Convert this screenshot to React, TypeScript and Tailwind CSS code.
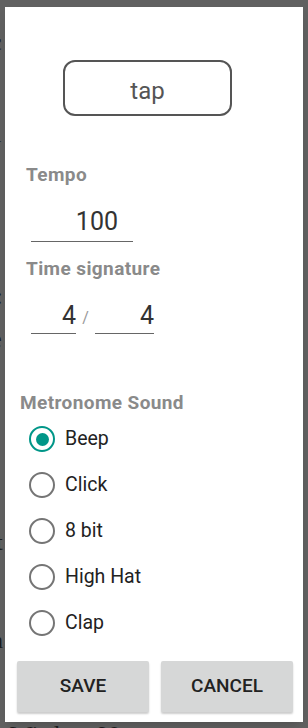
import { useState } from 'react';

const sounds = ['Beep', 'Click', '8 bit', 'High Hat', 'Clap'];

export default function App() {
  const [sound, setSound] = useState('Beep');

  return (
    <div
      className="relative h-[728px] w-[308px] overflow-hidden bg-[#616161] pt-[7px]"
      style={{ fontFamily: 'Roboto, "Noto Sans", sans-serif' }}
    >
      {/* page behind the dimmed overlay */}
      <div className="text-[#1c1c1c] text-[24px] leading-none" style={{ fontFamily: '"Liberation Serif", serif' }}>
        <span className="absolute left-[-9px] top-[30px]">c</span>
        <span className="absolute left-[-11px] top-[132px]">y</span>
        <span className="absolute left-[-4px] top-[284px]">:</span>
        <span className="absolute left-[-9px] top-[327px]">e</span>
        <span className="absolute left-[-4px] top-[530px]">t</span>
        <span className="absolute left-[-9px] top-[628px]">n</span>
        <span className="absolute left-[10px] top-[722px]">Wisdom 90</span>
      </div>

      {/* dialog */}
      <div className="relative mx-[5px] flex h-[715px] flex-col bg-white shadow-lg">
        <button className="ml-[58px] mt-[53px] flex h-[56px] w-[169px] items-center justify-center rounded-[12px] border-2 border-[#555555] pt-[5px] text-[24px] text-[#555555]">
          tap
        </button>

        <div className="ml-[21px] mt-[49px] text-[19px] font-bold leading-[20px] tracking-[0.4px] text-[#8a8a8a]">Tempo</div>
        <div className="ml-[26px] mt-[23px] w-[102px] border-b border-[#666666] pb-[5px] pr-[15px] text-right text-[25px] leading-[28px] text-[#333333]">
          100
        </div>

        <div className="ml-[21px] mt-[17px] text-[19px] font-bold leading-[20px] tracking-[0.4px] text-[#8a8a8a]">Time signature</div>
        <div className="ml-[26px] mt-[23px] flex items-end">
          <div className="w-[45px] border-b border-[#666666] pb-[3px] text-right text-[25px] leading-[28px] text-[#333333]">4</div>
          <div className="flex w-[19px] justify-center pb-[6px] text-[16px] leading-[20px] text-[#999999]">/</div>
          <div className="w-[59px] border-b border-[#666666] pb-[3px] text-right text-[25px] leading-[28px] text-[#333333]">4</div>
        </div>

        <div className="ml-[15px] mt-[59px] text-[19px] font-bold leading-[20px] tracking-[0.4px] text-[#8a8a8a]">Metronome Sound</div>
        <div className="mt-[3px] flex flex-col">
          {sounds.map((s) => (
            <label key={s} className="flex h-[46px] cursor-pointer items-center pl-[24px]" onClick={() => setSound(s)}>
              <span
                className={
                  sound === s
                    ? 'flex h-[26px] w-[26px] items-center justify-center rounded-full border-[2.5px] border-[#009688]'
                    : 'flex h-[26px] w-[26px] items-center justify-center rounded-full border-[2.5px] border-[#757575]'
                }
              >
                {sound === s && <span className="h-[13px] w-[13px] rounded-full bg-[#009688]" />}
              </span>
              <span className="ml-[10px] text-[19.5px] text-[#222222]">{s}</span>
            </label>
          ))}
        </div>

        <div className="ml-[12px] mt-[15px] flex gap-[12px]">
          <button className="h-[51px] w-[132px] rounded-[2px] bg-[#d6d7d7] text-[19px] font-medium text-[#222222] shadow-[0_2px_2px_rgba(0,0,0,0.2)]">
            SAVE
          </button>
          <button className="h-[51px] w-[132px] rounded-[2px] bg-[#d6d7d7] text-[19px] font-medium text-[#222222] shadow-[0_2px_2px_rgba(0,0,0,0.2)]">
            CANCEL
          </button>
        </div>
      </div>
    </div>
  );
}
